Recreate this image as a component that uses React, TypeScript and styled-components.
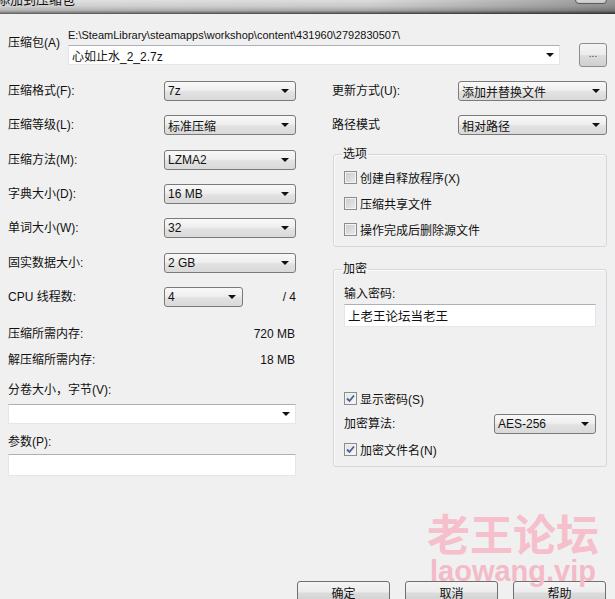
import React from "react";
import styled, { createGlobalStyle } from "styled-components";

const UI = `"Liberation Sans", "Noto Sans CJK SC", sans-serif`;

const Global = createGlobalStyle`
  html, body { margin: 0; padding: 0; background: #f0f0f0; }
  body { font-family: ${UI}; font-size: 12px; color: #111; }
`;

const Window = styled.div`
  position: relative;
  width: 615px;
  height: 599px;
  overflow: hidden;
  background: #f0f0f0;
  display: flex;
  flex-direction: column;
`;

const TitleBar = styled.div`
  height: 14px;
  flex: none;
  display: flex;
  align-items: flex-start;
  overflow: hidden;
  background:
    linear-gradient(to right, rgba(255,255,255,0.15) 0%, rgba(0,0,0,0) 60%, rgba(0,0,0,0.22) 90%, rgba(0,0,0,0.3) 100%),
    linear-gradient(to bottom, #dcdcdc 0%, #c9c9c9 45%, #a6a6a6 75%, #666 92%, #3a3a3a 100%);
`;

const TitleText = styled.span`
  font-size: 13px;
  line-height: 16px;
  margin-top: -8px;
  margin-left: -3px;
  color: #111;
`;

const TitleButton = styled.span`
  margin-left: auto;
  margin-right: 8px;
  margin-top: -6px;
  width: 32px;
  height: 10px;
  box-sizing: border-box;
  border: 1px solid #5a5a5a;
  border-radius: 0 0 4px 4px;
  background: linear-gradient(#e6e6e6, #c9c9c9);
`;

const Body = styled.div`
  padding: 0 8px;
  display: flex;
  flex-direction: column;
`;

const ArchiveRow = styled.div`
  margin-top: 14px;
  display: grid;
  grid-template-columns: 60px 492px 1fr;
  align-items: start;
`;

const Label = styled.span`
  font-size: 12px;
  line-height: 16px;
  white-space: nowrap;
`;

const ArchiveLabel = styled(Label)`
  margin-top: 7px;
`;

const ArchiveFields = styled.div`
  display: flex;
  flex-direction: column;
  gap: 3px;
`;

const PathText = styled.span`
  font-size: 11px;
  line-height: 14px;
  white-space: nowrap;
`;

const EditCombo = styled.div`
  height: 20px;
  box-sizing: border-box;
  display: flex;
  align-items: center;
  justify-content: space-between;
  padding: 0 5px 0 3px;
  background: #fff;
  border: 1px solid #e3e6ea;
  border-top-color: #adb0b6;
  font-size: 12px;
`;

const Arrow = styled.span`
  width: 0;
  height: 0;
  border-left: 4px solid transparent;
  border-right: 4px solid transparent;
  border-top: 4px solid #111;
  flex: none;
`;

const BrowseButton = styled.button`
  justify-self: end;
  margin-top: 15px;
  width: 28px;
  height: 24px;
  padding: 0 0 4px;
  box-sizing: border-box;
  border: 1px solid #8c8c8c;
  border-radius: 3px;
  background: linear-gradient(#f4f4f4 0%, #ececec 48%, #dddddd 52%, #cfcfcf 100%);
  font-family: ${UI};
  font-size: 10px;
  color: #333;
`;

const Columns = styled.div`
  margin-top: 14px;
  display: grid;
  grid-template-columns: 288px 275px;
  column-gap: 36px;
`;

const LeftCol = styled.div`
  display: flex;
  flex-direction: column;
`;

const RightCol = styled.div`
  display: flex;
  flex-direction: column;
`;

const FormGrid = styled.div<{ $label: number; $gap: number }>`
  display: grid;
  grid-template-columns: ${(p) => p.$label}px 1fr;
  grid-auto-rows: 20px;
  row-gap: ${(p) => p.$gap}px;
  align-items: center;
`;

const Select = styled.div<{ $w?: number }>`
  width: ${(p) => (p.$w ? `${p.$w}px` : "100%")};
  height: 20px;
  box-sizing: border-box;
  display: flex;
  align-items: center;
  justify-content: space-between;
  padding: 0 6px 0 3px;
  border: 1px solid #7a7a7a;
  border-radius: 3px;
  background: linear-gradient(#f8f8f8 0%, #efefef 45%, #e2e2e2 55%, #d9d9d9 100%);
  font-size: 12px;
  white-space: nowrap;
`;

const CpuCell = styled.div`
  display: flex;
  align-items: center;
  justify-content: space-between;
`;

const InfoRow = styled.div<{ $mt: number }>`
  margin-top: ${(p) => p.$mt}px;
  display: flex;
  justify-content: space-between;
  font-size: 12px;
  line-height: 16px;
  padding-right: 1px;
`;

const FieldLabel = styled(Label)<{ $mt: number }>`
  display: block;
  margin-top: ${(p) => p.$mt}px;
`;

const TextBox = styled.div<{ $h: number; $mt: number }>`
  margin-top: ${(p) => p.$mt}px;
  height: ${(p) => p.$h}px;
  box-sizing: border-box;
  display: flex;
  align-items: center;
  justify-content: space-between;
  padding: 0 5px 0 3px;
  background: #fff;
  border: 1px solid #e3e6ea;
  border-top-color: #adb0b6;
  font-size: 12.5px;
`;

const Group = styled.fieldset<{ $mt: number }>`
  margin: ${(p) => p.$mt}px 0 0 1px;
  padding: 0 10px 9px 10px;
  border: 1px solid #d5d8dc;
  border-radius: 3px;
  box-shadow: inset 1px 1px 0 #fbfbfb;
  display: flex;
  flex-direction: column;
  min-width: 0;
`;

const Legend = styled.legend`
  padding: 0 1px;
  margin-left: -2px;
  font-size: 12px;
  line-height: 16px;
`;

const CheckRow = styled.label<{ $mt: number }>`
  margin-top: ${(p) => p.$mt}px;
  display: flex;
  align-items: center;
  gap: 3px;
  height: 16px;
  font-size: 12px;
  white-space: nowrap;
`;

const Box = styled.span<{ $checked?: boolean }>`
  width: 13px;
  height: 13px;
  box-sizing: border-box;
  flex: none;
  border: 1px solid #8a8c8f;
  box-shadow: inset 0 0 0 1px #f3f3f3;
  background: ${(p) =>
    p.$checked
      ? "linear-gradient(135deg, #dfe3e8, #f6f7f8)"
      : "linear-gradient(135deg, #c9cbce, #eaebec)"};
  display: flex;
  align-items: center;
  justify-content: center;
`;

const AlgoRow = styled.div`
  margin-top: 8px;
  display: flex;
  align-items: center;
  justify-content: space-between;
`;

const ButtonBar = styled.div`
  margin-top: 105px;
  margin-right: 1px;
  display: flex;
  justify-content: flex-end;
  gap: 15px;
`;

const DialogButton = styled.button`
  width: 93px;
  height: 23px;
  box-sizing: border-box;
  border: 1px solid #707070;
  border-radius: 3px;
  background: linear-gradient(#f4f4f4 0%, #ececec 48%, #dcdcdc 52%, #cfcfcf 100%);
  font-family: ${UI};
  font-size: 12px;
  color: #111;
  padding: 0;
`;

const Watermark = styled.div`
  position: absolute;
  left: 427px;
  top: 508px;
  display: flex;
  flex-direction: column;
  align-items: center;
  color: #f6bfcc;
  pointer-events: none;
`;

const WmTitle = styled.span`
  font-family: "Noto Sans CJK SC", sans-serif;
  font-weight: 700;
  font-size: 43px;
  line-height: 48px;
`;

const WmUrl = styled.span`
  font-family: "Liberation Sans", sans-serif;
  font-weight: 700;
  font-size: 29px;
  line-height: 30px;
  color: #f5bac8;
`;

const Check = () => (
  <svg width="9" height="9" viewBox="0 0 9 9">
    <path d="M1 4.5 L3.5 7 L8 1.5" fill="none" stroke="#4d5f8e" strokeWidth="1.8" />
  </svg>
);

const CheckBox = ({ checked, label, mt }: { checked?: boolean; label: string; mt: number }) => (
  <CheckRow $mt={mt}>
    <Box $checked={checked}>{checked && <Check />}</Box>
    {label}
  </CheckRow>
);

const leftRows: [string, string][] = [
  ["压缩格式(F):", "7z"],
  ["压缩等级(L):", "标准压缩"],
  ["压缩方法(M):", "LZMA2"],
  ["字典大小(D):", "16 MB"],
  ["单词大小(W):", "32"],
  ["固实数据大小:", "2 GB"],
];

export default function App() {
  return (
    <>
      <Global />
      <Window>
        <TitleBar>
          <TitleText>添加到压缩包</TitleText>
          <TitleButton />
        </TitleBar>
        <Body>
          <ArchiveRow>
            <ArchiveLabel>压缩包(A)</ArchiveLabel>
            <ArchiveFields>
              <PathText>E:\SteamLibrary\steamapps\workshop\content\431960\2792830507\</PathText>
              <EditCombo>
                心如止水_2_2.7z
                <Arrow />
              </EditCombo>
            </ArchiveFields>
            <BrowseButton>...</BrowseButton>
          </ArchiveRow>
          <Columns>
            <LeftCol>
              <FormGrid $label={156} $gap={14.33}>
                {leftRows.map(([l, v]) => (
                  <React.Fragment key={l}>
                    <Label>{l}</Label>
                    <Select>
                      {v}
                      <Arrow />
                    </Select>
                  </React.Fragment>
                ))}
                <Label>CPU 线程数:</Label>
                <CpuCell>
                  <Select $w={79}>
                    4
                    <Arrow />
                  </Select>
                  <span>/ 4</span>
                </CpuCell>
              </FormGrid>
              <InfoRow $mt={19}>
                <span>压缩所需内存:</span>
                <span>720 MB</span>
              </InfoRow>
              <InfoRow $mt={10}>
                <span>解压缩所需内存:</span>
                <span>18 MB</span>
              </InfoRow>
              <FieldLabel $mt={14}>分卷大小，字节(V):</FieldLabel>
              <TextBox $h={20} $mt={6}>
                <span />
                <Arrow />
              </TextBox>
              <FieldLabel $mt={10}>参数(P):</FieldLabel>
              <TextBox $h={22} $mt={4} />
            </LeftCol>
            <RightCol>
              <FormGrid $label={126} $gap={14}>
                <Label>更新方式(U):</Label>
                <Select>
                  添加并替换文件
                  <Arrow />
                </Select>
                <Label>路径模式</Label>
                <Select>
                  相对路径
                  <Arrow />
                </Select>
              </FormGrid>
              <Group $mt={11}>
                <Legend>选项</Legend>
                <CheckBox mt={7} label="创建自释放程序(X)" />
                <CheckBox mt={10} label="压缩共享文件" />
                <CheckBox mt={10} label="操作完成后删除源文件" />
              </Group>
              <Group $mt={14}>
                <Legend>加密</Legend>
                <FieldLabel $mt={9}>输入密码:</FieldLabel>
                <TextBox $h={23} $mt={2}>上老王论坛当老王</TextBox>
                <CheckBox mt={63} checked label="显示密码(S)" />
                <AlgoRow>
                  <Label>加密算法:</Label>
                  <Select $w={102}>
                    AES-256
                    <Arrow />
                  </Select>
                </AlgoRow>
                <CheckBox mt={7} checked label="加密文件名(N)" />
              </Group>
            </RightCol>
          </Columns>
          <ButtonBar>
            <DialogButton>确定</DialogButton>
            <DialogButton>取消</DialogButton>
            <DialogButton>帮助</DialogButton>
          </ButtonBar>
        </Body>
        <Watermark>
          <WmTitle>老王论坛</WmTitle>
          <WmUrl>laowang.vip</WmUrl>
        </Watermark>
      </Window>
    </>
  );
}
